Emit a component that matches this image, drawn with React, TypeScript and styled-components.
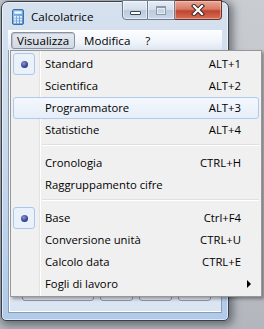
import React from 'react';
import styled, { createGlobalStyle } from 'styled-components';

const GlobalStyle = createGlobalStyle`
  html, body {
    margin: 0;
    padding: 0;
  }
  body {
    width: 264px;
    height: 329px;
    overflow: hidden;
    background: linear-gradient(180deg, #c9ccd1 0%, #b3b7bd 100%);
    font-family: "Open Sans", "Noto Sans", sans-serif;
    font-size: 11.3px;
    color: #000;
  }
`;

type MenuEntry =
  | { kind: 'item'; label: string; shortcut?: string; checked?: boolean; hover?: boolean; submenu?: boolean }
  | { kind: 'sep' };

const entries: MenuEntry[] = [
  { kind: 'item', label: 'Standard', shortcut: 'ALT+1', checked: true },
  { kind: 'item', label: 'Scientifica', shortcut: 'ALT+2' },
  { kind: 'item', label: 'Programmatore', shortcut: 'ALT+3', hover: true },
  { kind: 'item', label: 'Statistiche', shortcut: 'ALT+4' },
  { kind: 'sep' },
  { kind: 'item', label: 'Cronologia', shortcut: 'CTRL+H' },
  { kind: 'item', label: 'Raggruppamento cifre' },
  { kind: 'sep' },
  { kind: 'item', label: 'Base', shortcut: 'Ctrl+F4', checked: true },
  { kind: 'item', label: 'Conversione unità', shortcut: 'CTRL+U' },
  { kind: 'item', label: 'Calcolo data', shortcut: 'CTRL+E' },
  { kind: 'item', label: 'Fogli di lavoro', submenu: true },
];

const CalcIcon = () => (
  <svg width="12" height="16" viewBox="0 0 12 16">
    <defs>
      <linearGradient id="calcBody" x1="0" y1="0" x2="1" y2="1">
        <stop offset="0" stopColor="#9cc6ef" />
        <stop offset="1" stopColor="#4f8fd0" />
      </linearGradient>
    </defs>
    <rect x="0.5" y="0.5" width="11" height="15" rx="1.5" fill="url(#calcBody)" stroke="#3d6fa8" />
    <rect x="2" y="2" width="8" height="3" fill="#f4f9ff" stroke="#6f97c4" strokeWidth="0.5" />
    {[0, 1, 2].map((r) =>
      [0, 1, 2].map((c) => (
        <rect key={`${r}-${c}`} x={2 + c * 3} y={7 + r * 2.7} width="2" height="1.8" fill="#e6f0fb" />
      )),
    )}
  </svg>
);

const CloseGlyph = () => (
  <svg width="14" height="12" viewBox="0 0 14 12">
    <path d="M3 2 L11 10 M11 2 L3 10" stroke="#3a2a28" strokeWidth="4.2" strokeLinecap="square" />
    <path d="M3 2 L11 10 M11 2 L3 10" stroke="#ffffff" strokeWidth="2.2" strokeLinecap="square" />
  </svg>
);

const App: React.FC = () => {
  return (
    <>
      <GlobalStyle />
      <Screen>
        <Window>
          <TitleBar>
            <TitleIcon>
              <CalcIcon />
            </TitleIcon>
            <TitleText>Calcolatrice</TitleText>
            <CaptionButtons>
              <CaptionButton $w={26} $pos="first">
                <MinGlyph />
              </CaptionButton>
              <CaptionButton $w={27}>
                <MaxGlyph />
              </CaptionButton>
              <CloseButton>
                <CloseGlyph />
              </CloseButton>
            </CaptionButtons>
          </TitleBar>
          <MenuBar>
            <MenuBarItem $active>Visualizza</MenuBarItem>
            <MenuBarItem>Modifica</MenuBarItem>
            <MenuBarItem>?</MenuBarItem>
          </MenuBar>
          <Client>
            <Keypad>
              <KeyButton $span={2}>0</KeyButton>
              <KeyButton>,</KeyButton>
              <KeyButton>+</KeyButton>
              <KeyButton>=</KeyButton>
            </Keypad>
          </Client>
        </Window>

        <Popup>
          {entries.map((e, i) =>
            e.kind === 'sep' ? (
              <Separator key={i} />
            ) : (
              <Item key={i} $hover={e.hover}>
                <Check $on={e.checked}>{e.checked && <Bullet />}</Check>
                <Label>{e.label}</Label>
                <Shortcut>{e.shortcut}</Shortcut>
                <ArrowCell>{e.submenu && <Arrow />}</ArrowCell>
              </Item>
            ),
          )}
        </Popup>
      </Screen>
    </>
  );
};

const Screen = styled.div`
  position: relative;
  width: 264px;
  height: 329px;
  padding: 1px 0 0 1px;
  box-sizing: border-box;
`;

const Window = styled.div`
  width: 228px;
  height: 320px;
  box-sizing: border-box;
  border: 1px solid #3a3f48;
  border-radius: 7px 7px 5px 5px;
  padding: 0 6px 7px 6px;
  display: flex;
  flex-direction: column;
  background: linear-gradient(180deg, #d6e1ee 0%, #cadaed 40%, #b0caea 100%);
  box-shadow: inset 0 0 0 1px rgba(255, 255, 255, 0.55), 2px 2px 9px 2px rgba(40, 44, 52, 0.55);
`;

const TitleBar = styled.div`
  height: 28px;
  display: flex;
  align-items: flex-start;
`;

const TitleIcon = styled.div`
  margin: 7px 0 0 4px;
  width: 12px;
  height: 16px;
  display: flex;
`;

const TitleText = styled.div`
  margin: 7px 0 0 7px;
  font-size: 11.6px;
  line-height: 16px;
  flex: 1;
`;

const CaptionButtons = styled.div`
  display: flex;
  margin-top: -2px;
  height: 20px;
`;

const CaptionButton = styled.div<{ $w: number; $pos?: 'first' }>`
  width: ${(p) => p.$w}px;
  height: 20px;
  box-sizing: border-box;
  border: 1px solid #6c7b8e;
  border-left: ${(p) => (p.$pos === 'first' ? '1px solid #6c7b8e' : 'none')};
  border-radius: ${(p) => (p.$pos === 'first' ? '0 0 0 4px' : '0')};
  background: linear-gradient(180deg, #e6edf5 0%, #d3deea 48%, #bccbdd 52%, #c9d7e8 100%);
  box-shadow: inset 0 0 0 1px rgba(255, 255, 255, 0.5);
  display: flex;
  align-items: center;
  justify-content: center;
`;

const CloseButton = styled.div`
  width: 47px;
  height: 20px;
  box-sizing: border-box;
  border: 1px solid #6b3128;
  border-left: none;
  border-radius: 0 0 4px 0;
  background: linear-gradient(180deg, #e8a898 0%, #d77b66 45%, #c2432e 55%, #d3705a 100%);
  box-shadow: inset 0 0 0 1px rgba(255, 220, 210, 0.45);
  display: flex;
  align-items: center;
  justify-content: center;
`;

const MinGlyph = styled.div`
  width: 9px;
  height: 2px;
  margin-top: 6px;
  background: #fff;
  border: 1px solid #3c4552;
  border-radius: 1px;
`;

const MaxGlyph = styled.div`
  width: 8px;
  height: 6px;
  border: 1px solid #8c99aa;
  border-top-width: 2px;
  background: #c8d4e3;
  box-shadow: inset 0 0 0 1px #e4ebf3;
`;

const MenuBar = styled.div`
  height: 20px;
  display: flex;
  align-items: center;
  padding-left: 3px;
  gap: 3px;
  background: linear-gradient(180deg, #fbfcfe 0%, #f1f5fa 55%, #dde6f2 100%);
  border-top: 1px solid #ffffff;
  box-sizing: border-box;
`;

const MenuBarItem = styled.div<{ $active?: boolean }>`
  height: 17px;
  line-height: 15px;
  padding: 0 5px;
  box-sizing: border-box;
  font-size: 11.6px;
  border: 1px solid ${(p) => (p.$active ? '#8592a4' : 'transparent')};
  border-radius: 3px;
  background: ${(p) => (p.$active ? 'linear-gradient(180deg, #e4e9f0 0%, #d2d9e3 100%)' : 'transparent')};
  box-shadow: ${(p) => (p.$active ? 'inset 1px 1px 1px rgba(0,0,0,0.15)' : 'none')};
`;

const Client = styled.div`
  flex: 1;
  display: flex;
  flex-direction: column;
  justify-content: flex-end;
  padding: 0 0 11px 13px;
  background: linear-gradient(180deg, #e9f0f8 0%, #dae5f3 100%);
  border: 1px solid #8e9cb0;
  border-top: none;
  box-shadow: inset 1px 0 0 #ffffff, inset 0 -1px 0 #ffffff;
`;

const Keypad = styled.div`
  display: grid;
  grid-template-columns: repeat(5, 33px);
  column-gap: 6px;
`;

const KeyButton = styled.div<{ $span?: number }>`
  grid-column: span ${(p) => p.$span ?? 1};
  height: 27px;
  box-sizing: border-box;
  border: 1px solid #8d9aab;
  border-radius: 3px;
  background: linear-gradient(180deg, #ffffff 0%, #f2f5f9 50%, #e4eaf2 100%);
  display: flex;
  align-items: center;
  justify-content: center;
  padding-top: 4px;
  font-size: 12px;
`;

const Popup = styled.div`
  position: absolute;
  left: 10px;
  top: 50px;
  width: 252px;
  box-sizing: border-box;
  border: 1px solid #979797;
  background: #f0f0f0;
  padding: 2px 2px 1px 2px;
  box-shadow: 2px 2px 3px rgba(0, 0, 0, 0.35);

  &::before {
    content: '';
    position: absolute;
    top: 0;
    bottom: 0;
    left: 28px;
    width: 1px;
    background: #e2e3e3;
    box-shadow: 1px 0 0 #ffffff;
  }
`;

const Item = styled.div<{ $hover?: boolean }>`
  position: relative;
  z-index: 1;
  height: 22px;
  box-sizing: border-box;
  display: grid;
  grid-template-columns: 22px 1fr auto 17px;
  align-items: center;
  border: 1px solid ${(p) => (p.$hover ? '#aecbee' : 'transparent')};
  border-radius: 3px;
  background: ${(p) => (p.$hover ? 'linear-gradient(180deg, #f4f8fd 0%, #e6eef9 100%)' : 'transparent')};
`;

const Check = styled.div<{ $on?: boolean }>`
  width: 22px;
  height: 22px;
  margin: -1px 0 -1px -1px;
  box-sizing: border-box;
  border: 1px solid ${(p) => (p.$on ? '#a9c8ec' : 'transparent')};
  border-radius: 3px;
  background: ${(p) => (p.$on ? '#e9f1fb' : 'transparent')};
  display: flex;
  align-items: center;
  justify-content: center;
`;

const Bullet = styled.div`
  width: 7px;
  height: 7px;
  border-radius: 50%;
  background: radial-gradient(circle at 40% 35%, #8e97d0 0%, #3d4796 55%, #262e6e 100%);
`;

const Label = styled.div`
  padding-left: 9px;
  white-space: nowrap;
  line-height: 20px;
`;

const Shortcut = styled.div`
  text-align: right;
  white-space: nowrap;
  line-height: 20px;
`;

const ArrowCell = styled.div`
  display: flex;
  align-items: center;
  padding-left: 6px;
`;

const Arrow = styled.div`
  width: 0;
  height: 0;
  border-top: 4px solid transparent;
  border-bottom: 4px solid transparent;
  border-left: 4px solid #000;
`;

const Separator = styled.div`
  height: 8px;
  margin-left: 29px;
  position: relative;
  z-index: 1;

  &::after {
    content: '';
    display: block;
    margin-top: 3px;
    height: 1px;
    background: #e0e0e0;
    box-shadow: 0 1px 0 #ffffff;
  }
`;

export default App;
